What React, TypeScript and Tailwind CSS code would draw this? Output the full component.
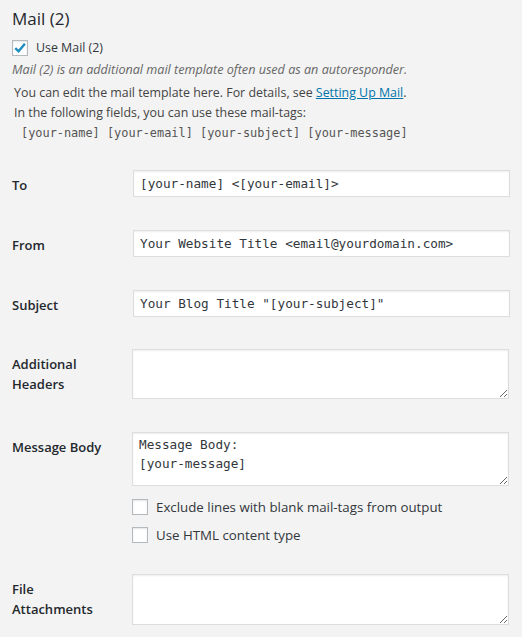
import React from "react";

const sans = { fontFamily: '"Open Sans", "Noto Sans", sans-serif' };
const mono = { fontFamily: '"DejaVu Sans Mono", "Liberation Mono", monospace' };

function Check({ checked }: { checked?: boolean }) {
  return (
    <span className="inline-flex h-4 w-4 shrink-0 items-center justify-center border border-[#b4b9be] bg-white shadow-[inset_0_1px_2px_rgba(0,0,0,0.1)]">
      {checked && (
        <svg width="14" height="14" viewBox="0 0 16 16">
          <path d="M2.6 8.2 L6.4 11.8 L13.6 3.2" fill="none" stroke="#1e8cbe" strokeWidth="2.8" strokeLinecap="butt" strokeLinejoin="miter" />
        </svg>
      )}
    </span>
  );
}

function Label({ children }: { children: React.ReactNode }) {
  return (
    <div className="w-[120px] shrink-0 pt-[5px] text-[13px] leading-5 font-semibold text-[#23282d]">
      {children}
    </div>
  );
}

function Input({ value }: { value: string }) {
  return (
    <input
      readOnly
      value={value}
      style={mono}
      className="ml-px -mr-px h-[27px] min-w-0 flex-1 border border-[#ddd] bg-white px-[6px] text-[12.7px] text-[#32373c] shadow-[inset_0_1px_2px_rgba(0,0,0,0.07)] outline-none"
    />
  );
}

function Area({ value, h }: { value?: string; h: string }) {
  return (
    <textarea
      readOnly
      value={value ?? ""}
      style={mono}
      className={`min-w-0 flex-1 border border-[#ddd] bg-white px-[6px] py-[2px] text-[12.7px] leading-[19px] text-[#32373c] shadow-[inset_0_1px_2px_rgba(0,0,0,0.07)] outline-none ${h}`}
    />
  );
}

export default function App() {
  return (
    <div style={sans} className="min-h-screen bg-[#f3f3f3] pl-3 pr-[13px] text-[13px] text-[#444]">
      <h2 className="pt-[7px] text-[17px] leading-6 font-normal text-[#23282d]">Mail (2)</h2>
      <label className="mt-[9px] flex items-center gap-2 text-[12.4px] leading-4 text-[#32373c]">
        <Check checked />
        <span>Use Mail (2)</span>
      </label>
      <p className="mt-[4px] text-[12.6px] leading-5 italic text-[#666]">
        Mail (2) is an additional mail template often used as an autoresponder.
      </p>
      <div className="mt-[3px] pl-[2px] text-[12.4px] leading-5 text-[#444]">
        <div>
          You can edit the mail template here. For details, see{" "}
          <a className="text-[#0073aa] underline">Setting Up Mail</a>.
        </div>
        <div>In the following fields, you can use these mail-tags:</div>
        <div style={mono} className="pl-[7px] text-[11.9px] text-[#555]">
          [your-name] [your-email] [your-subject] [your-message]
        </div>
      </div>

      <div className="mt-[27px] flex">
        <Label>To</Label>
        <Input value="[your-name] <[your-email]>" />
      </div>
      <div className="mt-[33px] flex">
        <Label>From</Label>
        <Input value="Your Website Title <email@yourdomain.com>" />
      </div>
      <div className="mt-[33px] flex">
        <Label>Subject</Label>
        <Input value='Your Blog Title "[your-subject]"' />
      </div>
      <div className="mt-[32px] flex">
        <Label>
          Additional
          <br />
          Headers
        </Label>
        <Area h="h-[50px]" />
      </div>
      <div className="mt-[33px] flex">
        <Label>Message Body</Label>
        <div className="flex min-w-0 flex-1 flex-col">
          <Area h="h-[54px] flex-none" value={"Message Body:\n[your-message]"} />
          <label className="mt-[13px] flex items-center gap-2 text-[13.3px] leading-4 text-[#32373c]">
            <Check />
            <span>Exclude lines with blank mail-tags from output</span>
          </label>
          <label className="mt-[12px] flex items-center gap-2 text-[13.3px] leading-4 text-[#32373c]">
            <Check />
            <span>Use HTML content type</span>
          </label>
        </div>
      </div>
      <div className="mt-[31px] flex pb-3">
        <Label>
          File
          <br />
          Attachments
        </Label>
        <Area h="h-[51px]" />
      </div>
    </div>
  );
}
